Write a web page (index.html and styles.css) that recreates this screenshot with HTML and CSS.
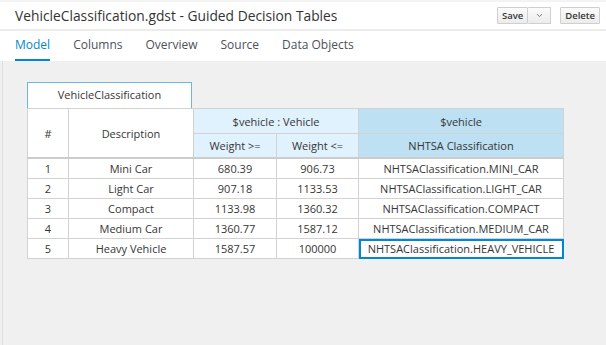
FILE: index.html
```html
<!DOCTYPE html>
<html>
<head>
  <title>VehicleClassification.gdst - Guided Decision Tables</title>
  <link rel="stylesheet" href="styles.css">
</head>
<body>
<div class="editor">
  <div class="title-bar">
    <h1>VehicleClassification.gdst - Guided Decision Tables</h1>
    <div class="actions">
      <div class="btn-group">
        <button class="btn">Save</button>
        <button class="btn caret">
          <svg width="7" height="5" viewBox="0 0 7 5"><path d="M1 1.2 L3.5 3.6 L6 1.2" fill="none" stroke="#777" stroke-width="1"/></svg>
        </button>
      </div>
      <div class="btn-group">
        <button class="btn">Delete</button>
      </div>
    </div>
  </div>
  <ul class="tabs">
    <li class="active">Model</li>
    <li>Columns</li>
    <li>Overview</li>
    <li>Source</li>
    <li>Data Objects</li>
  </ul>
  <div class="content">
    <div class="decision-table">
      <div class="table-name">VehicleClassification</div>
      <table>
        <colgroup>
          <col class="c-num">
          <col class="c-desc">
          <col class="c-w1">
          <col class="c-w2">
          <col class="c-act">
        </colgroup>
        <thead>
          <tr class="h1">
            <th rowspan="2">#</th>
            <th rowspan="2">Description</th>
            <th colspan="2" class="cond">$vehicle : Vehicle</th>
            <th class="action">$vehicle</th>
          </tr>
          <tr class="h2">
            <th class="cond">Weight &gt;=</th>
            <th class="cond">Weight &lt;=</th>
            <th class="action">NHTSA Classification</th>
          </tr>
        </thead>
        <tbody>
          <tr><td>1</td><td>Mini Car</td><td>680.39</td><td>906.73</td><td>NHTSAClassification.MINI_CAR</td></tr>
          <tr><td>2</td><td>Light Car</td><td>907.18</td><td>1133.53</td><td>NHTSAClassification.LIGHT_CAR</td></tr>
          <tr><td>3</td><td>Compact</td><td>1133.98</td><td>1360.32</td><td>NHTSAClassification.COMPACT</td></tr>
          <tr><td>4</td><td>Medium Car</td><td>1360.77</td><td>1587.12</td><td>NHTSAClassification.MEDIUM_CAR</td></tr>
          <tr><td>5</td><td>Heavy Vehicle</td><td>1587.57</td><td>100000</td><td class="selected">NHTSAClassification.HEAVY_VEHICLE</td></tr>
        </tbody>
      </table>
    </div>
  </div>
</div>
</body>
</html>
```

FILE: styles.css
```css
body {
    margin: 0;
    padding: 0;
    background-color: #f0f0f0;
    font-family: "Open Sans", "Liberation Sans", sans-serif;
    color: #363636;
}

.editor {
    height: 345px;
    display: flex;
    flex-direction: column;
    border-top: 2px solid #f3f3f3;
    box-sizing: border-box;
}

.title-bar {
    background-color: #ffffff;
    height: 27px;
    display: flex;
    align-items: center;
    justify-content: space-between;
    padding: 0 6px 0 15px;
    border-bottom: 2px solid #ececec;
}

h1 {
    margin: 0;
    font-size: 13.8px;
    font-weight: normal;
    color: #333333;
}

.actions {
    display: flex;
    gap: 9px;
    margin-top: -1px;
}

.btn-group {
    display: flex;
}

.btn {
    font-family: "Open Sans", "Liberation Sans", sans-serif;
    font-size: 9.5px;
    font-weight: 600;
    color: #363636;
    height: 17px;
    padding: 0 4px;
    background: linear-gradient(#fbfbfb, #ececec);
    border: 1px solid #cfcfcf;
    border-radius: 1px;
    line-height: 15px;
}

.btn + .btn {
    border-left: none;
}

.btn.caret {
    width: 23px;
    padding: 0;
    display: flex;
    align-items: center;
    justify-content: center;
}

.tabs {
    list-style: none;
    margin: 0;
    padding: 0 0 0 15px;
    height: 30px;
    display: flex;
    background-color: #ffffff;
}

.tabs li {
    font-size: 12px;
    color: #4d5258;
    line-height: 28px;
    margin-right: 23px;
    border-bottom: 2px solid transparent;
    height: 28px;
}

.tabs li.active {
    color: #0088ce;
    border-bottom-color: #0088ce;
}

.content {
    flex: 1;
    padding: 21px 0 0 27px;
    border-left: 1px solid #dedede;
    margin-left: 2px;
}

.decision-table {
    width: 536px;
    margin-left: -3px;
}

.table-name {
    width: 163px;
    height: 25px;
    line-height: 24px;
    text-align: center;
    font-size: 11px;
    background-color: #ffffff;
    border: 1px solid #6fb6de;
    border-bottom: none;
}

table {
    border-collapse: collapse;
    table-layout: fixed;
    width: 536px;
    background-color: #ffffff;
    border: 1px solid #6fb6de;
    font-size: 11px;
}

.c-num { width: 41px; }
.c-desc { width: 125px; }
.c-w1 { width: 83px; }
.c-w2 { width: 82px; }
.c-act { width: 205px; }

th, td {
    border: 1px solid #d2d2d2;
    text-align: center;
    font-weight: normal;
    padding: 0;
    white-space: nowrap;
    overflow: hidden;
}

th {
    background-color: #ffffff;
}

.h1 th {
    height: 24px;
}

.h2 th {
    height: 23px;
}

thead tr:last-child th,
thead th[rowspan] {
    border-bottom: 2px solid #cccccc;
}

th.cond {
    background-color: #e0f2fd;
}

th.action {
    background-color: #bde0f3;
}

td {
    height: 19px;
}

td.selected {
    outline: 2px solid #0088ce;
    outline-offset: -2px;
}
```
